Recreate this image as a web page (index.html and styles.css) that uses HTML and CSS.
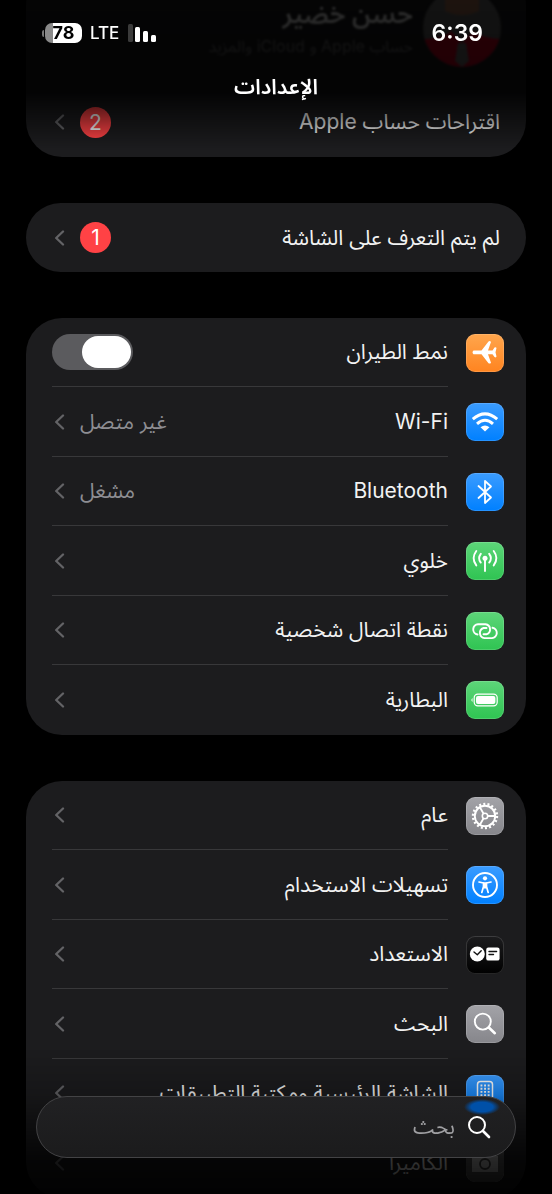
FILE: index.html
```html
<!DOCTYPE html>
<html lang="ar" dir="rtl">
<head>
<meta charset="utf-8">
<meta name="viewport" content="width=device-width, initial-scale=1">
<title>الإعدادات</title>
<link rel="stylesheet" href="styles.css">
</head>
<body>
<svg class="defs" aria-hidden="true">
  <symbol id="chevron" viewBox="0 0 16 16"><path d="M11 1.500 4.200 8 11 14.500" fill="none" stroke="currentColor" stroke-width="2.300" stroke-linecap="round" stroke-linejoin="round"/></symbol>
</svg>

<header class="topbar">
  <div class="status">
    <time class="clock">6:39</time>
    <div class="signals" dir="ltr">
      <span class="battery"><span class="battery-body">78</span></span>
      <span class="network">LTE</span>
      <svg class="bars" viewBox="0 0 30 18" aria-hidden="true">
        <rect x="1" y="0" width="5" height="18" rx="1.500" fill="#3a3a3a"/>
        <rect x="8" y="3" width="5" height="15" rx="1.500" fill="#fff"/>
        <rect x="16" y="7" width="5" height="11" rx="1.500" fill="#fff"/>
        <rect x="24" y="11" width="5" height="7" rx="1.500" fill="#fff"/>
      </svg>
    </div>
  </div>
  <h1 class="title">الإعدادات</h1>
</header>

<main class="list">
  <section class="card">
    <a class="profile" href="#">
      <svg class="avatar" viewBox="0 0 78 78" aria-hidden="true">
        <defs><clipPath id="round"><circle cx="39" cy="39" r="39"/></clipPath></defs>
        <g clip-path="url(#round)">
          <rect width="78" height="78" fill="#666"/>
          <path d="M22 0h34v22q-17 8-34 0z" fill="#a06a50"/>
          <path d="M0 50q20 0 28-8l11 12 11-12q12 8 28 8v28H0z" fill="#e00024"/>
          <path d="M35 54h8l3 18-7 6-7-6z" fill="#777"/>
        </g>
      </svg>
      <span class="who">
        <span class="name">حسن خضير</span>
        <span class="detail">حساب Apple و iCloud والمزيد</span>
      </span>
    </a>
    <a class="row plain" href="#">
      <span class="label">اقتراحات حساب Apple</span>
      <span class="badge">2</span>
      <svg class="chevron"><use href="#chevron"/></svg>
    </a>
  </section>

  <section class="card">
    <a class="row plain" href="#">
      <span class="label">لم يتم التعرف على الشاشة</span>
      <span class="badge">1</span>
      <svg class="chevron"><use href="#chevron"/></svg>
    </a>
  </section>

  <section class="card">
    <div class="row">
      <svg class="icon orange" viewBox="0 0 38 38" aria-hidden="true"><path d="M7.500 16.500H15.500L22.500 7.500Q24 6.500 25 8L22 16.500H26.500L28.500 13.500Q30 12.700 30.500 14L29.500 18.300 30.500 22.600Q30 24 28.500 23L26.500 20.200H22L25 28.700Q24 30.200 22.500 29.200L15.500 20.200H7.500Q5.500 18.300 7.500 16.500Z" fill="#fff"/></svg>
      <div class="body">
        <label class="label" for="airplane">نمط الطيران</label>
        <input class="switch" id="airplane" type="checkbox">
      </div>
    </div>
    <a class="row" href="#">
      <svg class="icon blue" viewBox="0 0 38 38" aria-hidden="true"><g fill="none" stroke="#fff" stroke-width="3"><path d="M6.800 16.200Q19 5.600 31.200 16.200"/><path d="M11 20.800Q19 13.800 27 20.800"/></g><path d="M14.500 24.200Q19 20.600 23.500 24.200L19 28.600Z" fill="#fff"/></svg>
      <div class="body"><span class="label">Wi-Fi</span><span class="value">غير متصل</span><svg class="chevron"><use href="#chevron"/></svg></div>
    </a>
    <a class="row" href="#">
      <svg class="icon blue" viewBox="0 0 38 38" aria-hidden="true"><path d="M12.500 13 25 24.500 19 30V8L25 13.500 12.500 25" fill="none" stroke="#fff" stroke-width="1.800" stroke-linejoin="round" stroke-linecap="round"/></svg>
      <div class="body"><span class="label">Bluetooth</span><span class="value">مشغل</span><svg class="chevron"><use href="#chevron"/></svg></div>
    </a>
    <a class="row" href="#">
      <svg class="icon green" viewBox="0 0 38 38" aria-hidden="true"><g fill="none" stroke="#fff" stroke-width="1.900" stroke-linecap="round"><path d="M19 17V29"/><path d="M14.800 11.800Q11.400 16.200 14.800 20.600"/><path d="M23.200 11.800Q26.600 16.200 23.200 20.600"/><path d="M10.300 9Q4.900 16.200 10.300 23.400"/><path d="M27.700 9Q33.100 16.200 27.700 23.400"/></g><circle cx="19" cy="16.200" r="2.500" fill="#fff"/></svg>
      <div class="body"><span class="label">خلوي</span><svg class="chevron"><use href="#chevron"/></svg></div>
    </a>
    <a class="row" href="#">
      <svg class="icon green" viewBox="0 0 38 38" aria-hidden="true"><g fill="none" stroke="#fff" stroke-width="1.900" stroke-linecap="round"><path d="M11.500 22.500A5.200 5.200 0 0 1 12 12.200H19.500A5.200 5.200 0 0 1 20.500 22.300H17.500"/><path d="M26.500 15.800A5.200 5.200 0 0 1 26 26.100H18.500A5.200 5.200 0 0 1 17.500 16H20.500"/></g></svg>
      <div class="body"><span class="label">نقطة اتصال شخصية</span><svg class="chevron"><use href="#chevron"/></svg></div>
    </a>
    <a class="row" href="#">
      <svg class="icon green" viewBox="0 0 38 38" aria-hidden="true"><rect x="8.200" y="13.200" width="23" height="11.600" rx="3.600" fill="none" stroke="#fff" stroke-width="1.200"/><rect x="10" y="15" width="19.400" height="8" rx="2" fill="#fff"/><path d="M6.500 17Q4.300 19 6.500 21Z" fill="#fff"/></svg>
      <div class="body"><span class="label">البطارية</span><svg class="chevron"><use href="#chevron"/></svg></div>
    </a>
  </section>

  <section class="card">
    <a class="row" href="#">
      <svg class="icon gray" viewBox="0 0 38 38" aria-hidden="true"><g fill="none" stroke="#fff"><circle cx="19" cy="19" r="12" stroke-width="2.400" stroke-dasharray="2 2.189"/><circle cx="19" cy="19" r="10.200" stroke-width="1.900"/><circle cx="19" cy="19" r="2.700" stroke-width="1.600"/><path d="M21.700 19H29M17.600 16.700 13.900 10.200M17.600 21.300 13.900 27.800" stroke-width="1.800"/></g></svg>
      <div class="body"><span class="label">عام</span><svg class="chevron"><use href="#chevron"/></svg></div>
    </a>
    <a class="row" href="#">
      <svg class="icon blue" viewBox="0 0 38 38" aria-hidden="true"><circle cx="19" cy="19" r="12" fill="none" stroke="#fff" stroke-width="1.900"/><circle cx="19" cy="12.300" r="2.100" fill="#fff"/><path d="M13 16 17.500 17V20.500L15.800 26.500M25 16 20.500 17V20.500L22.200 26.500" fill="none" stroke="#fff" stroke-width="1.700" stroke-linecap="round" stroke-linejoin="round"/><path d="M17 16.300H21V21L20.500 22.500H17.500L17 21Z" fill="#fff"/></svg>
      <div class="body"><span class="label">تسهيلات الاستخدام</span><svg class="chevron"><use href="#chevron"/></svg></div>
    </a>
    <a class="row" href="#">
      <svg class="icon black" viewBox="0 0 38 38" aria-hidden="true"><circle cx="11.300" cy="18" r="7.500" fill="#fff"/><rect x="20.200" y="11.600" width="13.400" height="13" rx="2.200" fill="#fff"/><path d="M8 16 11.300 18.700 15.200 14.700M23 15.500H30.600M23 18.500H27.500" fill="none" stroke="#111" stroke-width="1.400" stroke-linecap="round" stroke-linejoin="round"/></svg>
      <div class="body"><span class="label">الاستعداد</span><svg class="chevron"><use href="#chevron"/></svg></div>
    </a>
    <a class="row" href="#">
      <svg class="icon gray" viewBox="0 0 38 38" aria-hidden="true"><circle cx="16.800" cy="16.600" r="8" fill="none" stroke="#fff" stroke-width="1.900"/><path d="M22.800 22.500 28.800 28.200" stroke="#fff" stroke-width="2.600" stroke-linecap="round"/></svg>
      <div class="body"><span class="label">البحث</span><svg class="chevron"><use href="#chevron"/></svg></div>
    </a>
    <a class="row" href="#">
      <svg class="icon blue" viewBox="0 0 38 38" aria-hidden="true"><rect x="11.500" y="6.500" width="15" height="26" rx="3" fill="none" stroke="#fff" stroke-width="1.500"/><path d="M14.500 10.500H24M14.500 13.700H24M14.500 16.900H24M14.500 20.100H24" stroke="#fff" stroke-width="1.900" stroke-dasharray="1.900 1.700"/></svg>
      <div class="body"><span class="label">الشاشة الرئيسية ومكتبة التطبيقات</span><svg class="chevron"><use href="#chevron"/></svg></div>
    </a>
    <a class="row" href="#">
      <svg class="icon gray" viewBox="0 0 38 38" aria-hidden="true"><rect width="38" height="38" rx="9" fill="#555"/><path d="M6 12H12L14 9H24L26 12H32V28H6Z" fill="#bbb"/><circle cx="19" cy="20" r="5" fill="none" stroke="#444" stroke-width="1.800"/></svg>
      <div class="body"><span class="label">الكاميرا</span><svg class="chevron"><use href="#chevron"/></svg></div>
    </a>
  </section>
</main>

<footer class="bottombar">
  <form class="search" role="search">
    <label class="search-label" for="query" aria-label="بحث"><svg viewBox="0 0 24 24" aria-hidden="true"><circle cx="10" cy="10" r="8" fill="none" stroke="#fff" stroke-width="2"/><path d="M16 16 22 22" stroke="#fff" stroke-width="2.600" stroke-linecap="round"/></svg></label>
    <input class="query" id="query" type="search" placeholder="بحث">
  </form>
</footer>
</body>
</html>
```
FILE: styles.css
```css
* {
  box-sizing: border-box;
}

body {
  margin: 0;
  height: 100vh;
  overflow: hidden;
  background: #000;
  color: #f2f2f2;
  font-family: Inter, "Noto Sans Arabic", "DejaVu Sans", sans-serif;
  font-size: 21px;
  line-height: 28px;
}

a {
  color: inherit;
  text-decoration: none;
}

.defs {
  position: absolute;
  width: 0;
  height: 0;
}

/* Top bar floats over the scrolled list */
.topbar {
  position: fixed;
  inset: 0 0 auto;
  z-index: 2;
  height: 150px;
  padding-top: 18px;
  background: linear-gradient(rgba(0, 0, 0, 0.82) 0, rgba(0, 0, 0, 0.85) 60px, rgba(0, 0, 0, 0.85) 92px, rgba(0, 0, 0, 0.4) 122px, rgba(0, 0, 0, 0) 148px);
}

.status {
  display: flex;
  align-items: center;
  justify-content: space-between;
  height: 30px;
  padding: 0 69px 0 42px;
}

.clock {
  color: #fff;
  font-size: 23px;
  font-weight: 600;
}

.signals {
  display: flex;
  align-items: center;
  gap: 8px;
}

.battery {
  display: flex;
  align-items: center;
  gap: 1px;
}

.battery::before {
  content: "";
  width: 2px;
  height: 7px;
  border-radius: 2px 0 0 2px;
  background: #777;
}

.battery-body {
  width: 37px;
  border-radius: 7px;
  background: linear-gradient(to right, #8a8a8a 8px, #fff 8px);
  color: #000;
  font-size: 18px;
  font-weight: 700;
  line-height: 20px;
  text-align: center;
}

.network {
  color: #fff;
  font-size: 17px;
  font-weight: 500;
}

.bars {
  width: 30px;
  height: 18px;
}

.title {
  margin: 24px 0 0;
  color: #fff;
  font-size: 21px;
  font-weight: 600;
  line-height: 30px;
  text-align: center;
}

.list {
  display: flex;
  flex-direction: column;
  gap: 46px;
  margin-top: -31px;
  padding: 0 26px;
}

.card {
  flex: none;
  border-radius: 36px;
  background: #1c1c1e;
}

.profile {
  display: flex;
  align-items: center;
  gap: 10px;
  height: 118px;
  padding: 0 25px;
  filter: blur(1px);
}

.avatar {
  width: 78px;
  height: 78px;
}

.who {
  display: flex;
  flex-direction: column;
}

.name {
  font-size: 26px;
  font-weight: 600;
  line-height: 36px;
}

.detail {
  color: #777;
  font-size: 16px;
}

.row {
  display: flex;
  align-items: center;
  gap: 18px;
  height: 69px;
  padding: 0 22px 0 26px;
}

.row:nth-child(even) {
  height: 70px;
}

.plain {
  gap: 12px;
  padding: 0 26px;
}

.icon {
  flex: none;
  width: 38px;
  height: 38px;
  border-radius: 9px;
  box-shadow: inset 0 0 0 1px rgba(255, 255, 255, 0.15);
}

.orange { background: linear-gradient(#ffa64d, #ff8420); }
.blue { background: linear-gradient(#3b9cff, #0080ff); }
.green { background: linear-gradient(#5dd579, #2fc452); }
.gray { background: linear-gradient(#a3a3a8, #86868b); }
.black { background: linear-gradient(#1c1c1e, #000); }

.body {
  display: flex;
  flex: 1;
  align-items: center;
  gap: 12px;
  align-self: stretch;
  border-bottom: 1px solid #38383a;
}

.row:last-child .body {
  border-bottom: 0;
}

.label {
  flex: 1;
  white-space: nowrap;
}

.value {
  color: #8e8e93;
}

.chevron {
  flex: none;
  width: 16px;
  height: 16px;
  color: #636366;
}

.badge {
  width: 31px;
  border-radius: 50%;
  background: #ff4245;
  color: #fff;
  line-height: 31px;
  text-align: center;
}

.switch {
  display: flex;
  align-items: center;
  width: 81px;
  height: 36px;
  margin: 0;
  padding: 2px;
  border-radius: 18px;
  appearance: none;
  background: #5b5b5e;
}

.switch::before {
  content: "";
  width: 49px;
  height: 32px;
  border-radius: 16px;
  background: #fff;
}

.switch:checked {
  justify-content: flex-end;
  background: #30d158;
}

/* Search field floats over the end of the list */
.bottombar {
  position: fixed;
  inset: auto 0 0;
  z-index: 2;
  padding: 46px 36px 36px;
  background: linear-gradient(rgba(0, 0, 0, 0) 0, rgba(0, 0, 0, 0.2) 44px, rgba(0, 0, 0, 0.78) 108px, rgba(0, 0, 0, 0.92));
}

.search {
  display: flex;
  align-items: center;
  gap: 12px;
  height: 62px;
  padding: 0 24px;
  border: 1px solid #434345;
  border-radius: 31px;
  background: radial-gradient(ellipse 18px 8px at calc(100% - 33px) 10px, #0050a8 60%, transparent), linear-gradient(#212123, #1b1b1c);
}

.search-label,
.search-label svg {
  display: block;
  width: 24px;
  height: 24px;
}

.query {
  flex: 1;
  min-width: 0;
  padding: 0;
  border: 0;
  outline: 0;
  appearance: none;
  background: none;
  color: #fff;
  font: inherit;
}

.query::placeholder {
  color: #a0a0a3;
  opacity: 1;
}
```
